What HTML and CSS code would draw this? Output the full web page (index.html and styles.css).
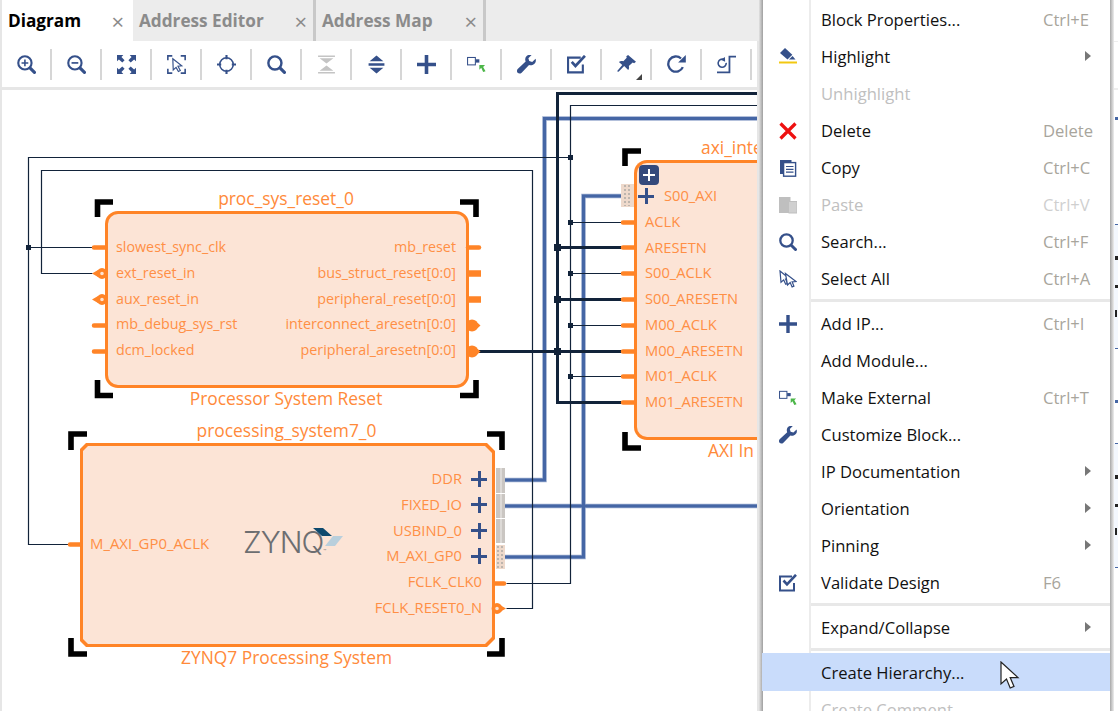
FILE: index.html
```html
<!DOCTYPE html>
<html lang="en">
<head>
    <meta charset="UTF-8">
    <title>Block Design</title>
    <link rel="stylesheet" href="styles.css">
</head>
<body>
    <svg class="defs" width="0" height="0">
        <symbol id="i-zoom-in" viewBox="0 0 18 18"><circle cx="7.5" cy="7.5" r="6.3" fill="none" stroke="currentColor" stroke-width="2"/><path d="M4.3 7.5h6.4M7.5 4.3v6.4" stroke="currentColor" stroke-width="1.5"/><path d="M12.5 12.5l4 4" stroke="currentColor" stroke-width="3" stroke-linecap="round"/></symbol>
        <symbol id="i-zoom-out" viewBox="0 0 18 18"><circle cx="7.5" cy="7.5" r="6.3" fill="none" stroke="currentColor" stroke-width="2"/><path d="M4.3 7.5h6.4" stroke="currentColor" stroke-width="1.6"/><path d="M12.5 12.5l4 4" stroke="currentColor" stroke-width="3" stroke-linecap="round"/></symbol>
        <symbol id="i-search" viewBox="0 0 18 18"><circle cx="7.5" cy="7.5" r="6.2" fill="none" stroke="currentColor" stroke-width="2.3"/><path d="M12.5 12.5l4 4" stroke="currentColor" stroke-width="3" stroke-linecap="round"/></symbol>
        <symbol id="i-fit" viewBox="0 0 18 18"><path d="M0 0h6L4.2 1.8 7.2 5 5 7.2 1.8 4.2 0 6zM18 0v6l-1.8-1.8L13 7.2 10.8 5l3-3.2L12 0zM0 18v-6l1.8 1.8L5 10.8 7.2 13l-3 3.2L6 18zM18 18h-6l1.8-1.8L10.8 13 13 10.8l3.2 3L18 12z" fill="currentColor"/></symbol>
        <symbol id="i-select" viewBox="0 0 18 18"><path d="M5 .8H.8V5M13 .8h4.2V5M.8 13v4.2H5M17.2 13v4.2H13" fill="none" stroke="currentColor" stroke-width="1.5"/><path d="M5.5 3.5l8.5 6.800-3.600.4 2.200 4-1.800 1-2.200-4-2.700 2.400z" fill="#fff" stroke="currentColor" stroke-width="1.1"/></symbol>
        <symbol id="i-target" viewBox="0 0 18 18"><circle cx="9" cy="9" r="6.4" fill="none" stroke="currentColor" stroke-width="1.5"/><path d="M9 0v4M9 14v4M0 9h4M14 9h4" stroke="currentColor" stroke-width="2"/></symbol>
        <symbol id="i-collapse" viewBox="0 0 18 18"><path d="M1 .5h16V2H1zM1 16h16v1.5H1zM2.5 3h13L9 8zM2.5 15h13L9 10z" fill="currentColor"/></symbol>
        <symbol id="i-expand" viewBox="0 0 18 18"><path d="M2.5 6L9 .5 15.500 6zM2.5 12L9 17.5 15.500 12zM1.500 7.800h15v2.400h-15z" fill="currentColor"/></symbol>
        <symbol id="i-plus" viewBox="0 0 18 18"><path d="M0 9h18M9 0v18" stroke="currentColor" stroke-width="3.4"/></symbol>
        <symbol id="i-external" viewBox="0 0 20 18"><rect x=".6" y="1.6" width="8.2" height="7.8" fill="#fff" stroke="currentColor" stroke-width="1.1"/><rect x="9" y="3.5" width="4" height="3.5" fill="currentColor"/><path d="M13 9.5h6l-2 2 2.500 4.500-2.500.8-2-4.300-2 2z" fill="#4cb648"/></symbol>
        <symbol id="i-wrench" viewBox="0 0 18 18"><path d="M17.6 3.6l-3.2 3-2.800-.8-.8-2.800 3-3C10.900-.8 8.100.7 7.800 3.700c-.1 1 .1 1.800.4 2.500L.9 13c-1.300 1.200-1.100 2.900-.3 3.800.9.900 2.500 1.100 3.800-.1l7-7.300c1 .4 2.200.5 3.200.1 2.600-.9 3.900-3.400 3-5.900z" fill="currentColor"/></symbol>
        <symbol id="i-check" viewBox="0 0 18 18"><path d="M13 2.5H1v14h14V9" fill="none" stroke="currentColor" stroke-width="2"/><path d="M4.5 6.5l3.500 3.800L17 .8" fill="none" stroke="currentColor" stroke-width="2.6"/></symbol>
        <symbol id="i-pin" viewBox="0 0 18 18"><path d="M10.5 0L18 6.500l-1.800 1.300-1.300-.6-3.700 3.200c.5 1.500.2 2.800-.6 3.800L6.800 10.500 1.500 15.800 0 15.500l5-6L1.800 6.600C3 5.600 4.500 5.400 6 6l3.200-3.500-.4-1.300z" fill="currentColor"/></symbol>
        <symbol id="i-refresh" viewBox="0 0 18 18"><path d="M15 11.5A7.2 7.2 0 1 1 13.3 3.3" fill="none" stroke="currentColor" stroke-width="2.2"/><path d="M10.5 7.2h7.3V0z" fill="currentColor"/></symbol>
        <symbol id="i-regen" viewBox="0 0 18 18"><path d="M8.7 7.5A3.8 3.8 0 1 1 6.500 4.300" fill="none" stroke="currentColor" stroke-width="1.5"/><path d="M3.6 4.5L7.5 1.800l.2 4.600z" fill="currentColor"/><path d="M0 16.5h11.8V1.500H18" fill="none" stroke="currentColor" stroke-width="1.7"/></symbol>
        <symbol id="i-erase" viewBox="0 0 18 18"><path d="M6 0l7.300 6.800-4.800 4.700L1 5z" fill="currentColor"/><path d="M10 11.5l3.500-3.500 3 3.500z" fill="currentColor"/><path d="M0 14.5h18" stroke="#f2c811" stroke-width="2"/></symbol>
        <symbol id="i-delete" viewBox="0 0 18 18"><path d="M1.5 1.5l15 15M16.5 1.5l-15 15" stroke="currentColor" stroke-width="3.2"/></symbol>
        <symbol id="i-copy" viewBox="0 0 18 18"><path d="M1 1h11.500v3H5.500v11H1z" fill="currentColor"/><rect x="4.6" y="3.6" width="12" height="13.6" fill="#fff" stroke="currentColor" stroke-width="1.4"/><path d="M7 7.5h7.500M7 10.300h7.500M7 13.100h7.500" stroke="currentColor" stroke-width="1.2"/></symbol>
        <symbol id="i-paste" viewBox="0 0 18 18"><path d="M0 1h11.500v16H0z" fill="#bfbfbf"/><path d="M9.5 5.500H18V17H9.500z" fill="#d0d0d0" stroke="#bfbfbf"/></symbol>
        <symbol id="i-select-all" viewBox="0 0 18 18"><path d="M1 1l9.500 7.800-3.900.3 1.900 4.300-1.800.8-2-4.300-2.700 2.400z" fill="#fff" stroke="currentColor" stroke-width="1.2"/><path d="M6.5 3.500l10.500 8-3.900.3 1.800 4.300-1.800.8-1.900-4.300-2.700 2.400z" fill="#fff" stroke="currentColor" stroke-width="1.2"/></symbol>
    </svg>

    <div class="app">
        <div class="tabs">
            <div class="tab active"><span class="tab-name">Diagram</span><span class="tab-x">×</span></div>
            <div class="tab wide"><span class="tab-name">Address Editor</span><span class="tab-x">×</span></div>
            <div class="tab"><span class="tab-name">Address Map</span><span class="tab-x">×</span></div>
        </div>
        <div class="toolbar">
            <div class="tool"><svg class="ico"><use href="#i-zoom-in"/></svg></div>
            <div class="tool"><svg class="ico"><use href="#i-zoom-out"/></svg></div>
            <div class="tool"><svg class="ico"><use href="#i-fit"/></svg></div>
            <div class="tool"><svg class="ico"><use href="#i-select"/></svg></div>
            <div class="tool"><svg class="ico"><use href="#i-target"/></svg></div>
            <div class="tool"><svg class="ico"><use href="#i-search"/></svg></div>
            <div class="tool off"><svg class="ico"><use href="#i-collapse"/></svg></div>
            <div class="tool"><svg class="ico"><use href="#i-expand"/></svg></div>
            <div class="tool"><svg class="ico"><use href="#i-plus"/></svg></div>
            <div class="tool"><svg class="ico"><use href="#i-external"/></svg></div>
            <div class="tool"><svg class="ico"><use href="#i-wrench"/></svg></div>
            <div class="tool"><svg class="ico"><use href="#i-check"/></svg></div>
            <div class="tool has-drop"><svg class="ico"><use href="#i-pin"/></svg></div>
            <div class="tool"><svg class="ico"><use href="#i-refresh"/></svg></div>
            <div class="tool"><svg class="ico"><use href="#i-regen"/></svg></div>
        </div>

        <div class="canvas">
            <!-- proc_sys_reset_0 -->
            <div class="node reset-node">
                <div class="node-title">proc_sys_reset_0</div>
                <div class="block round">
                    <div class="ports left">
                        <span>slowest_sync_clk</span>
                        <span>ext_reset_in</span>
                        <span>aux_reset_in</span>
                        <span>mb_debug_sys_rst</span>
                        <span>dcm_locked</span>
                    </div>
                    <div class="ports right">
                        <span>mb_reset</span>
                        <span>bus_struct_reset[0:0]</span>
                        <span>peripheral_reset[0:0]</span>
                        <span>interconnect_aresetn[0:0]</span>
                        <span>peripheral_aresetn[0:0]</span>
                    </div>
                </div>
                <div class="node-title">Processor System Reset</div>
            </div>

            <!-- processing_system7_0 -->
            <div class="node zynq-node">
                <div class="node-title">processing_system7_0</div>
                <div class="block chamfer">
                    <div class="chamfer-fill">
                        <div class="ports left gp-clk"><span>M_AXI_GP0_ACLK</span></div>
                        <div class="zynq-logo">
                            <span class="zynq-word">ZYNQ<small>™</small></span>
                            <svg class="zynq-mark" width="30" height="18" viewBox="0 0 30 18"><path d="M0 0h10l9 8H9z" fill="#0e4a6e"/><path d="M12 18l8-10h10l-8 10z" fill="#b9cfdc"/></svg>
                        </div>
                        <div class="ports right zynq-ports">
                            <span class="bus">DDR</span>
                            <span class="bus">FIXED_IO</span>
                            <span class="bus">USBIND_0</span>
                            <span class="bus">M_AXI_GP0</span>
                            <span>FCLK_CLK0</span>
                            <span>FCLK_RESET0_N</span>
                        </div>
                    </div>
                </div>
                <div class="node-title">ZYNQ7 Processing System</div>
            </div>

            <!-- axi interconnect, the menu hides the rest of it -->
            <div class="node axi-node">
                <div class="node-title">axi_inte</div>
                <div class="block round open-right">
                    <div class="expand-btn"><svg width="12" height="12" viewBox="0 0 12 12"><path d="M0 6h12M6 0v12" stroke="#fff" stroke-width="2"/></svg></div>
                    <div class="ports left axi-ports">
                        <span class="s-axi">S00_AXI</span>
                        <span>ACLK</span>
                        <span>ARESETN</span>
                        <span>S00_ACLK</span>
                        <span>S00_ARESETN</span>
                        <span>M00_ACLK</span>
                        <span>M00_ARESETN</span>
                        <span>M01_ACLK</span>
                        <span>M01_ARESETN</span>
                    </div>
                </div>
                <div class="node-title">AXI In</div>
            </div>

            <svg class="wires" width="755" height="621" viewBox="2 90 755 621">
                <!-- interface nets -->
                <g fill="none" stroke="#9aaccf" stroke-width="4.6">
                    <path d="M757 118.5H544.5V480H505"/>
                    <path d="M757 506H505"/>
                    <path d="M621 196H583.5V557H505"/>
                </g>
                <g fill="none" stroke="#4566a5" stroke-width="3">
                    <path d="M757 118.5H544.5V480H505"/>
                    <path d="M757 506H505"/>
                    <path d="M621 196H583.5V557H505"/>
                </g>
                <g transform="translate(.5 .5)">
                    <!-- thin nets -->
                    <g fill="none" stroke="#12233a" stroke-width="1.2">
                        <path d="M757 105H570V583H506"/>
                        <path d="M570 157H28V544H68"/>
                        <path d="M28 247H92"/>
                        <path d="M92 273H41V170H532V608H506"/>
                        <path d="M570 222H621M570 273H621M570 325H621M570 376H621"/>
                    </g>
                    <!-- thick nets -->
                    <g fill="none" stroke="#12233a" stroke-width="3">
                        <path d="M757 93H557V402H621"/>
                        <path d="M557 247H621M557 299H621M470 351H621"/>
                    </g>
                    <g fill="#12233a">
                        <rect x="567.5" y="154.5" width="5" height="5"/>
                        <rect x="25.5" y="244.5" width="5" height="5"/>
                        <rect x="567.5" y="219.5" width="5" height="5"/>
                        <rect x="567.5" y="270.5" width="5" height="5"/>
                        <rect x="567.5" y="322.5" width="5" height="5"/>
                        <rect x="567.5" y="373.5" width="5" height="5"/>
                        <rect x="553.5" y="243.5" width="7" height="7"/>
                        <rect x="553.5" y="295.5" width="7" height="7"/>
                        <rect x="553.5" y="347.5" width="7" height="7"/>
                    </g>
                </g>
                <!-- pin stubs -->
                <g fill="none" stroke="#ff8427" stroke-width="4.5" stroke-linecap="round">
                    <path d="M94 247.5H105M94 325.5H105M94 351.5H105"/>
                    <path d="M623 222.5H634M623 247.5H634M623 273.5H634M623 299.5H634M623 325.5H634M623 351.5H634M623 376.5H634M623 402.5H634"/>
                    <path d="M70 544.5H80"/>
                    <path d="M495 583.5H504"/>
                    <path d="M468 247.5H479"/>
                </g>
                <path d="M468 273.5H481M468 299.5H481" stroke="#ff8427" stroke-width="6.5"/>
                <g fill="#fce4d6" stroke="#ff8427" stroke-width="3.6">
                    <circle cx="102" cy="273.5" r="3.6"/>
                    <circle cx="102" cy="299.5" r="3.6"/>
                    <circle cx="497" cy="608.5" r="3.6"/>
                </g>
                <g fill="#ff8427">
                    <path d="M92 273.5l6-3.500v7zM92 299.5l6-3.500v7zM506 608.5l-6-3.500v7z"/>
                    <circle cx="472" cy="325.5" r="6"/>
                    <circle cx="472" cy="351.5" r="6"/>
                    <path d="M475 320.5l5.500 5-5.500 5zM475 346.5l5.500 5-5.500 5z"/>
                </g>
                <!-- bus connectors -->
                <g fill="#cac6c2">
                    <rect x="496" y="468" width="9" height="25"/>
                    <rect x="496" y="494" width="9" height="24"/>
                    <rect x="496" y="519" width="9" height="24"/>
                </g>
                <g fill="#eed9cb">
                    <rect x="496" y="545" width="9" height="24"/>
                    <rect x="621" y="184" width="13" height="23"/>
                </g>
                <path d="M501 468v25M501 494v24M501 519v24" stroke="#e4e1de" stroke-width="1.5"/>
                <path d="M498 546v22M502 546v22M625 185v21M629 185v21" stroke="#bdb5ae" stroke-width="2" stroke-dasharray="2 2"/>
                <!-- selection corners -->
                <g class="marks" fill="none" stroke="#000" stroke-width="5.6">
                    <path d="M97.5 217V202H113M476 217V202H460M97.5 380V395.5H113M476 380V395.5H460"/>
                    <path d="M71 450V434H87M502 450V434H487M71 638V654H87M502 638V654H487"/>
                    <path d="M625 166V151H641M625 432V448H641"/>
                </g>
            </svg>
        </div>
    </div>

    <div class="menu-shadow"></div>
    <div class="menu">
        <div class="mi"><span class="mi-ico"></span><span>Block Properties...</span><span class="key">Ctrl+E</span></div>
        <div class="mi sub"><svg class="mi-ico ico"><use href="#i-erase"/></svg><span>Highlight</span></div>
        <div class="mi off"><span class="mi-ico"></span><span>Unhighlight</span></div>
        <div class="mi"><svg class="mi-ico ico red"><use href="#i-delete"/></svg><span>Delete</span><span class="key">Delete</span></div>
        <div class="mi"><svg class="mi-ico ico"><use href="#i-copy"/></svg><span>Copy</span><span class="key">Ctrl+C</span></div>
        <div class="mi off"><svg class="mi-ico ico"><use href="#i-paste"/></svg><span>Paste</span><span class="key">Ctrl+V</span></div>
        <div class="mi"><svg class="mi-ico ico"><use href="#i-search"/></svg><span>Search...</span><span class="key">Ctrl+F</span></div>
        <div class="mi"><svg class="mi-ico ico"><use href="#i-select-all"/></svg><span>Select All</span><span class="key">Ctrl+A</span></div>
        <div class="sep"></div>
        <div class="mi"><svg class="mi-ico ico"><use href="#i-plus"/></svg><span>Add IP...</span><span class="key">Ctrl+I</span></div>
        <div class="mi"><span class="mi-ico"></span><span>Add Module...</span></div>
        <div class="mi"><svg class="mi-ico ico"><use href="#i-external"/></svg><span>Make External</span><span class="key">Ctrl+T</span></div>
        <div class="mi"><svg class="mi-ico ico"><use href="#i-wrench"/></svg><span>Customize Block...</span></div>
        <div class="mi sub"><span class="mi-ico"></span><span>IP Documentation</span></div>
        <div class="mi sub"><span class="mi-ico"></span><span>Orientation</span></div>
        <div class="mi sub"><span class="mi-ico"></span><span>Pinning</span></div>
        <div class="mi"><svg class="mi-ico ico"><use href="#i-check"/></svg><span>Validate Design</span><span class="key">F6</span></div>
        <div class="sep"></div>
        <div class="mi sub"><span class="mi-ico"></span><span>Expand/Collapse</span></div>
        <div class="sep"></div>
        <div class="mi hover"><span class="mi-ico"></span><span>Create Hierarchy...</span></div>
        <div class="mi off"><span class="mi-ico"></span><span>Create Comment</span></div>
    </div>

    <svg class="cursor" width="20" height="30" viewBox="0 0 20 30"><path d="M1 1v22l5.5-5 3.7 9 3.8-1.6-3.8-8.800H18z" fill="#fff" stroke="#222" stroke-width="1.2"/></svg>

    <!-- what shows of the panel behind the menu -->
    <svg class="edge" width="8" height="711" viewBox="0 0 8 711">
        <defs>
            <linearGradient id="edge-shade"><stop offset="0" stop-color="#a8a8a8"/><stop offset="1" stop-color="#eeeeee"/></linearGradient>
        </defs>
        <rect width="4" height="711" fill="url(#edge-shade)"/>
        <rect x="4" y="41" width="4" height="1" fill="#eee"/>
        <rect x="4" y="88" width="4" height="2" fill="#eee"/>
        <rect x="4" y="224" width="4" height="124" fill="#f3f7fd"/>
        <rect x="4" y="443" width="4" height="124" fill="#f3f7fd"/>
        <g fill="#4566a5">
            <rect x="5" y="117" width="3" height="3"/>
            <rect x="5" y="400" width="3" height="3"/>
            <rect x="5" y="224" width="3" height="1"/>
            <rect x="5" y="348" width="3" height="1"/>
            <rect x="5" y="443" width="3" height="1"/>
            <rect x="5" y="567" width="3" height="1"/>
        </g>
        <g fill="#222">
            <rect x="5" y="256" width="3" height="4"/>
            <rect x="5" y="285" width="3" height="3"/>
            <rect x="5" y="310" width="2" height="7"/>
            <rect x="5" y="475" width="3" height="4"/>
            <rect x="5" y="504" width="3" height="3"/>
            <rect x="5" y="528" width="2" height="7"/>
        </g>
    </svg>
</body>
</html>
```

FILE: styles.css
```css
* {
    box-sizing: border-box;
    margin: 0;
    padding: 0;
}

html, body {
    height: 100%;
    overflow: hidden;
}

body {
    position: relative;
    font-family: "Open Sans", "Noto Sans", sans-serif;
    background-color: #fff;
    color: #111;
}

.defs {
    position: absolute;
}

.app {
    width: 759px;
    height: 711px;
    display: flex;
    flex-direction: column;
    padding-left: 2px;
    background-color: #e6e6e6;
}

.ico {
    color: #35508a;
    display: block;
}

/* tabs */
.tabs {
    height: 41px;
    flex: none;
    display: flex;
    background-color: #ececec;
}

.tab {
    display: flex;
    align-items: center;
    justify-content: space-between;
    width: 170px;
    padding: 0 6px;
    border-right: 3px solid #c8c8c8;
    font-size: 17.2px;
    font-weight: 700;
    color: #8b8b8b;
}

.tab.wide {
    width: 183px;
}

.tab.active {
    width: 131px;
    padding-right: 9px;
    background-color: #fff;
    border-right: none;
    color: #000;
}

.tab-x {
    font-size: 22px;
    font-weight: 400;
    color: #8a8a8a;
    line-height: 1;
}

/* toolbar */
.toolbar {
    height: 46px;
    flex: none;
    display: flex;
    align-items: center;
    margin-right: 2px;
    background-color: #fff;
}

.tool {
    position: relative;
    width: 50px;
    height: 31px;
    flex: none;
    display: flex;
    align-items: center;
    justify-content: center;
    border-right: 2px solid #d6d6d6;
}

.tool .ico {
    width: 19px;
    height: 19px;
}

.tool.off .ico {
    color: #c4c4c4;
}

.tool.has-drop::after {
    content: "";
    position: absolute;
    right: 8px;
    bottom: 0;
    border-style: solid;
    border-width: 0 0 6px 6px;
    border-color: transparent transparent #444 transparent;
}

/* diagram */
.canvas {
    position: relative;
    flex: 1;
    margin-top: 3px;
    margin-right: 2px;
    background-color: #fff;
    overflow: hidden;
}

.wires {
    position: absolute;
    left: 0;
    top: 0;
    pointer-events: none;
}

.marks {
    filter: blur(0.5px);
}

.node {
    position: absolute;
    display: flex;
    flex-direction: column;
    font-size: 14.3px;
    color: #ff8f45;
}

.reset-node {
    left: 103px;
    top: 96px;
    width: 364px;
}

.zynq-node {
    left: 78px;
    top: 328px;
    width: 415px;
}

.axi-node {
    left: 632px;
    top: 45px;
    width: 123px;
}

.node-title {
    height: 25px;
    line-height: 25px;
    padding-right: 2px;
    font-size: 17.4px;
    text-align: center;
    color: #ff8a3a;
    white-space: nowrap;
}

.node-title:last-child {
    margin-top: -2px;
}

.block {
    display: flex;
    justify-content: space-between;
    background-color: #fce4d6;
    border: 3px solid #ff8427;
}

.block.round {
    border-radius: 13px;
}

.reset-node .block {
    height: 177px;
    padding: 20px 10px 0 8px;
}

.axi-node .block {
    position: relative;
    height: 280px;
    padding: 20px 0 0 8px;
    border-right: none;
    border-radius: 13px 0 0 13px;
}

.axi-node .node-title {
    text-align: left;
    padding: 0 0 0 67px;
}

.axi-node .node-title:last-child {
    padding-left: 74px;
}

/* zynq block has cut corners */
.block.chamfer {
    height: 204px;
    padding: 0;
    border: none;
    background-color: #ff8427;
    clip-path: polygon(6px 0, calc(100% - 8px) 0, 100% 8px, 100% calc(100% - 8px), calc(100% - 8px) 100%, 6px 100%, 0 calc(100% - 6px), 0 6px);
}

.chamfer-fill {
    position: relative;
    display: flex;
    justify-content: space-between;
    width: 100%;
    margin: 3px;
    padding: 0 10px 0 7px;
    background-color: #fce4d6;
    clip-path: polygon(5px 0, calc(100% - 7px) 0, 100% 7px, 100% calc(100% - 7px), calc(100% - 7px) 100%, 5px 100%, 0 calc(100% - 5px), 0 5px);
}

.ports {
    display: flex;
    flex-direction: column;
}

.ports span {
    height: 25.75px;
    line-height: 25.75px;
    white-space: nowrap;
}

.ports.right {
    text-align: right;
}

.axi-ports {
    font-size: 14.7px;
}

.gp-clk {
    padding-top: 85px;
    font-size: 14.9px;
}

.zynq-ports {
    padding-top: 20px;
    font-size: 14.7px;
}

.zynq-ports .bus {
    position: relative;
    padding-right: 20px;
}

.zynq-ports .bus::after {
    content: "";
    position: absolute;
    right: -5px;
    top: 5px;
    width: 16px;
    height: 16px;
    background:
        linear-gradient(#35508a, #35508a) center / 100% 3px no-repeat,
        linear-gradient(#35508a, #35508a) center / 3px 100% no-repeat;
}

.s-axi {
    position: relative;
    padding-left: 19px;
}

.s-axi::before {
    content: "";
    position: absolute;
    left: -7px;
    top: 5px;
    width: 16px;
    height: 16px;
    background:
        linear-gradient(#35508a, #35508a) center / 100% 3px no-repeat,
        linear-gradient(#35508a, #35508a) center / 3px 100% no-repeat;
}

.expand-btn {
    position: absolute;
    left: 2px;
    top: 2px;
    width: 20px;
    height: 20px;
    display: flex;
    align-items: center;
    justify-content: center;
    background-color: #34497c;
    border-radius: 4px;
}

.zynq-logo {
    position: absolute;
    left: 160px;
    top: 76px;
    width: 104px;
    height: 40px;
}

.zynq-word {
    font-family: "Inter", "Liberation Sans", sans-serif;
    font-weight: 300;
    font-size: 30px;
    line-height: 40px;
    letter-spacing: -1px;
    color: #6d6e71;
}

.zynq-word small {
    font-size: 5px;
    letter-spacing: 0;
}

.zynq-mark {
    position: absolute;
    left: 70px;
    top: 6px;
}

/* context menu */
.menu-shadow {
    position: absolute;
    left: 759px;
    top: 0;
    width: 4px;
    height: 711px;
    background: linear-gradient(to right, #e2e2e2, #9f9f9f);
}

.menu {
    position: absolute;
    left: 763px;
    top: 1px;
    width: 348px;
    background-color: #fff;
    font-size: 16.6px;
    white-space: nowrap;
}

.menu::before {
    content: "";
    position: absolute;
    left: 46px;
    top: -1px;
    bottom: 0;
    width: 2px;
    background-color: #ececec;
}

.mi {
    position: relative;
    height: 37px;
    display: grid;
    grid-template-columns: 46px 234px 1fr;
    align-items: center;
    padding-right: 4px;
}

.mi > span:nth-child(2) {
    padding-left: 12px;
}

.mi-ico.ico {
    width: 18px;
    height: 18px;
    margin-left: 16px;
}

.red {
    color: #ee1111;
}

.key {
    color: #a8a59c;
}

.mi.off {
    color: #c0c0c0;
}

.mi.off .key {
    color: #cfcfcf;
}

.mi.sub::after {
    content: "";
    position: absolute;
    right: 20px;
    top: 13px;
    border-style: solid;
    border-width: 5px 0 5px 6px;
    border-color: transparent transparent transparent #777;
}

.mi.hover {
    margin-left: -1px;
    margin-top: -1px;
    height: 38px;
    padding-top: 1px;
    background-color: #c9dcfb;
    grid-template-columns: 47px 233px 1fr;
}

.sep {
    height: 8px;
    padding-top: 2px;
    margin-left: 47px;
}

.sep::before {
    content: "";
    display: block;
    height: 3px;
    background-color: #e8e8e8;
}

.cursor {
    position: absolute;
    left: 1000px;
    top: 661px;
}

.edge {
    position: absolute;
    left: 1110px;
    top: 0;
}
```
